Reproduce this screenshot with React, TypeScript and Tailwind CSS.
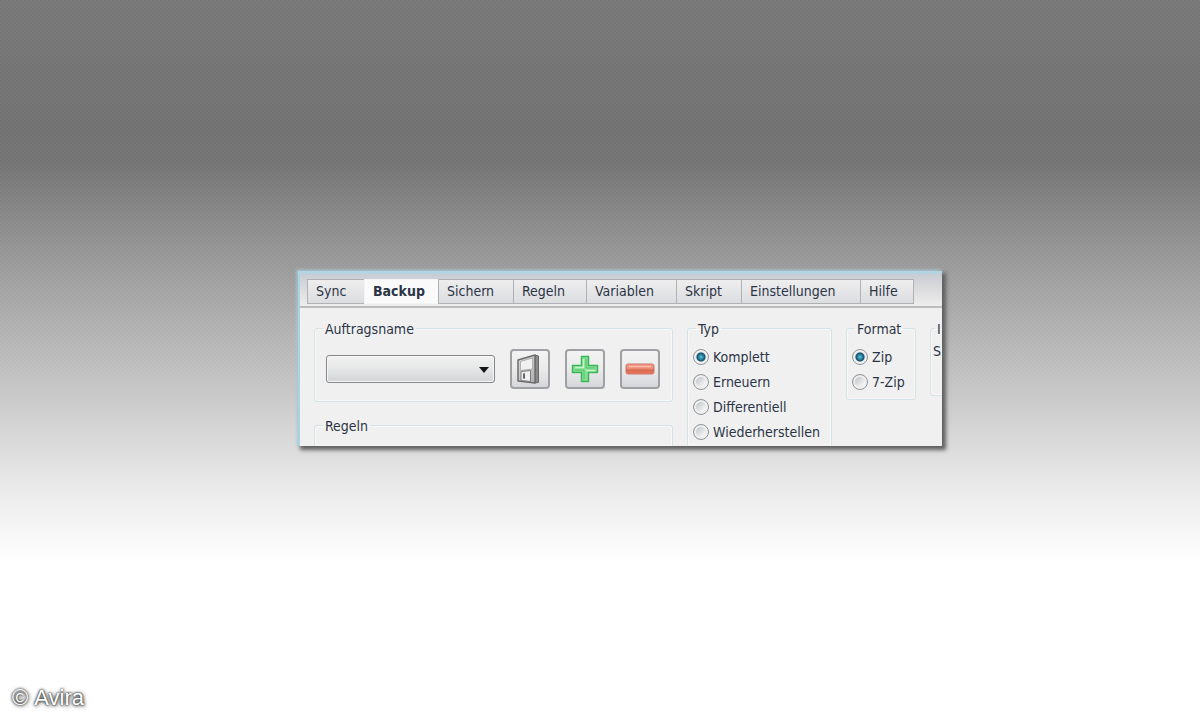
import React, { useState } from 'react';

const tabs = [
  { label: 'Sync', width: 'w-[57px]' },
  { label: 'Backup', width: 'w-[74px]' },
  { label: 'Sichern', width: 'w-[75px]' },
  { label: 'Regeln', width: 'w-[73px]' },
  { label: 'Variablen', width: 'w-[90px]' },
  { label: 'Skript', width: 'w-[65px]' },
  { label: 'Einstellungen', width: 'w-[119px]' },
  { label: 'Hilfe', width: 'w-[54px]' },
];

const types = ['Komplett', 'Erneuern', 'Differentiell', 'Wiederherstellen'];
const formats = ['Zip', '7-Zip'];

const DiskIcon = () => (
  <svg viewBox="0 0 30 32" className="w-[30px] h-8" aria-hidden="true">
    <defs>
      <linearGradient id="disk" x1="0" y1="0" x2="1" y2="1">
        <stop offset="0" stopColor="#dedede" />
        <stop offset="1" stopColor="#b0b0b0" />
      </linearGradient>
    </defs>
    <path d="M20 2l3.500 1v26.500l-4 .5z" fill="#8b8b8b" stroke="#6a6a6a" />
    <path d="M3 7L20 2v28L3 28z" fill="url(#disk)" stroke="#6c6c6c" strokeWidth="1.500" strokeLinejoin="round" />
    <path d="M5.500 8.500L17.500 5v11l-12 1.500z" fill="#f1f1f1" stroke="#a5a5a5" strokeWidth="0.800" />
    <path d="M6 18.500l9.500-1v11l-9.500-1z" fill="#f0f0f0" stroke="#7b7b7b" />
    <path d="M8 20.500l2-.2v5.500l-2-.2z" fill="#666" />
  </svg>
);

const PlusIcon = () => (
  <svg viewBox="0 0 30 32" className="w-[30px] h-8" aria-hidden="true">
    <path d="M11.500 3.500h7v9h9v7h-9v9h-7v-9h-9v-7h9z" fill="#86dd96" stroke="#3bb758" strokeWidth="1.500" strokeLinejoin="round" />
    <path d="M13.500 6v8.500H5M16 17.500h9" fill="none" stroke="#c6f3ca" strokeWidth="1.500" />
    <path d="M16 6v9h9M14 26v-9H5" fill="none" stroke="#4fc468" strokeWidth="1" />
  </svg>
);

const MinusIcon = () => (
  <svg viewBox="0 0 30 32" className="w-[30px] h-8" aria-hidden="true">
    <defs>
      <linearGradient id="minus" x1="0" y1="0" x2="0" y2="1">
        <stop offset="0" stopColor="#ee9c8b" />
        <stop offset="0.400" stopColor="#f0927e" />
        <stop offset="0.600" stopColor="#d9694f" />
        <stop offset="1" stopColor="#e67a62" />
      </linearGradient>
    </defs>
    <rect x="1" y="11" width="28" height="10" rx="2" fill="url(#minus)" stroke="#cf7462" />
    <path d="M4 13.500h22" stroke="#f8bfae" strokeWidth="1.200" />
  </svg>
);

const actions = [
  { label: 'Speichern', icon: <DiskIcon /> },
  { label: 'Hinzufügen', icon: <PlusIcon /> },
  { label: 'Entfernen', icon: <MinusIcon /> },
];

const groupClass = 'min-w-0 border border-[#d3e3e6] rounded-[3px] shadow-[inset_0_0_0_1px_#f8f8f8]';
const legendClass = 'ml-2 px-[2px] h-4 leading-4';

interface RadioListProps {
  name: string;
  options: string[];
  value: string;
  onChange: (value: string) => void;
}

const RadioList: React.FC<RadioListProps> = ({ name, options, value, onChange }) => (
  <div className="flex flex-col pt-2 pl-[5px]">
    {options.map((option) => (
      <label key={option} className="flex items-center gap-1 h-[25px] whitespace-nowrap">
        <input
          type="radio"
          name={name}
          checked={value === option}
          onChange={() => onChange(option)}
          className="appearance-none shrink-0 w-4 h-4 rounded-full border border-[#929699] bg-[linear-gradient(135deg,#c3c7cc_20%,#f6f6f6_75%)] shadow-[inset_0_0_0_2px_#efefef] checked:bg-[radial-gradient(circle_at_50%_50%,#6cc8dd_0,#2d8dab_2px,#1a4d6c_4px,#b9cad2_5px,#f2f4f5_7px)]"
        />
        {option}
      </label>
    ))}
  </div>
);

const App: React.FC = () => {
  const [activeTab, setActiveTab] = useState('Backup');
  const [type, setType] = useState('Komplett');
  const [format, setFormat] = useState('Zip');

  return (
    <div className="min-h-screen flex flex-col bg-[linear-gradient(to_bottom,#777_0,#707070_18%,#747474_23%,#aaa_43%,#c8c8c8_55%,#e8e8e8_67%,#fff_78%)]">
      <div className="flex-1 flex flex-col bg-[conic-gradient(#ffffff0a_25%,transparent_0_50%,#ffffff0a_0_75%,transparent_0)] bg-size-[4px_4px]">
        <main className="flex-1 flex items-center justify-center pt-10 pl-10 font-['DejaVu_Sans_Condensed','DejaVu_Sans',sans-serif] text-[14px] text-[#2b3446]">
          <div className="w-full max-w-[644px] overflow-hidden bg-[#f0f0f0] border-t-[3px] border-l-2 border-t-[#b4d4e3] border-l-[#a5d6e5] shadow-[3px_3px_4px_1px_#606060,-1px_-1px_3px_#b5d9e6]">
            <div role="tablist" className="flex items-end h-[34px] pt-1 pl-[7px] pb-[2px] border-b-2 border-[#bcbcbf] bg-linear-to-b from-[#c7cdd4] via-[#dddddf] to-[#ededed]">
              {tabs.map((tab) => (
                <button
                  key={tab.label}
                  role="tab"
                  aria-selected={activeTab === tab.label}
                  onClick={() => setActiveTab(tab.label)}
                  className={`${tab.width} shrink-0 h-[25px] pl-2 text-left border border-r-0 last:border-r ${
                    activeTab === tab.label
                      ? 'font-bold bg-[#fafafa] border-[#f4f4f4]'
                      : 'bg-linear-to-b from-[#eeeeef] to-[#dcdddf] border-[#b0b1b5]'
                  }`}
                >
                  {tab.label}
                </button>
              ))}
            </div>

            <div className="flex items-start gap-[14px] pt-[13px] pl-[14px]">
              <div className="w-[359px] shrink-0">
                <fieldset className={groupClass}>
                  <legend className={legendClass}>Auftragsname</legend>
                  <div className="flex items-center gap-[15px] pl-[11px] pr-3 py-3">
                    <div className="relative flex-1">
                      <select
                        aria-label="Auftragsname"
                        className="block appearance-none w-full h-7 border border-[#85878b] rounded-[3px] bg-linear-to-b from-[#f2f2f2] via-[#e6e7e8] to-[#d2d3d6] shadow-[inset_0_0_0_1px_#f6f6f6]"
                      >
                        <option></option>
                      </select>
                      <svg viewBox="0 0 10 6" className="absolute right-[6px] top-3 w-[10px] h-[6px] pointer-events-none" aria-hidden="true">
                        <path d="M0 0h10L5 6z" fill="#151515" />
                      </svg>
                    </div>
                    {actions.map((action) => (
                      <button
                        key={action.label}
                        aria-label={action.label}
                        className="shrink-0 w-10 h-10 flex items-center justify-center border-2 border-[#a0a1a4] rounded-[4px] bg-linear-to-b from-[#f3f3f3] via-[#ebebec] to-[#d6d7da]"
                      >
                        {action.icon}
                      </button>
                    ))}
                  </div>
                </fieldset>
                <fieldset className={`${groupClass} mt-4 rounded-b-none border-b-0`}>
                  <legend className={legendClass}>Regeln</legend>
                  <div className="h-3"></div>
                </fieldset>
              </div>

              <fieldset className={`${groupClass} w-[145px] shrink-0 rounded-b-none border-b-0`}>
                <legend className={legendClass}>Typ</legend>
                <RadioList name="type" options={types} value={type} onChange={setType} />
              </fieldset>

              <fieldset className={`${groupClass} w-[70px] shrink-0 pb-1`}>
                <legend className={legendClass}>Format</legend>
                <RadioList name="format" options={formats} value={format} onChange={setFormat} />
              </fieldset>

              <fieldset className={`${groupClass} w-[70px] shrink-0 pb-9`}>
                <legend className="ml-1 px-[2px] h-4 leading-4">I</legend>
                <p className="pl-[2px] pt-[6px] leading-4">S</p>
              </fieldset>
            </div>
          </div>
        </main>

        <footer className="flex gap-[6px] h-11 pl-3 pt-2 font-['Liberation_Sans',Arial,sans-serif] text-[22px] leading-7 text-white [text-shadow:0_0_2px_#333,0_0_3px_#444,1px_1px_4px_#555]">
          <span>©</span>
          <span>Avira</span>
        </footer>
      </div>
    </div>
  );
};

export default App;
